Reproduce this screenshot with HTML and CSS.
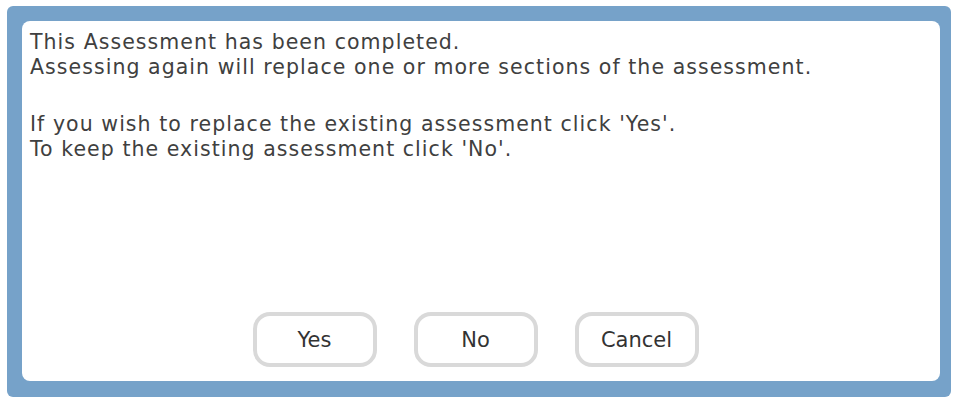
FILE: index.html
```html
<!DOCTYPE html>
<html>
<head>
<meta charset="utf-8">
<link rel="stylesheet" href="styles.css">
</head>
<body>
<div class="frame">
  <div class="dialog">
    <div class="message">
      <p class="para">This Assessment has been completed.<br>Assessing again will replace one or more sections of the assessment.</p>
      <p class="para">If you wish to replace the existing assessment click 'Yes'.<br>To keep the existing assessment click 'No'.</p>
    </div>
    <div class="buttons">
      <button class="btn">Yes</button>
      <button class="btn">No</button>
      <button class="btn">Cancel</button>
    </div>
  </div>
</div>
</body>
</html>
```
FILE: styles.css
```css
html, body {
  margin: 0;
  padding: 0;
  background: #ffffff;
}
body {
  padding: 6px 0 0 7px;
  font-family: "DejaVu Sans", Verdana, sans-serif;
}
.frame {
  box-sizing: border-box;
  width: 944px;
  height: 391px;
  background: #76a2c9;
  border-radius: 6px;
  padding: 15px 11px 16px 15px;
}
.dialog {
  box-sizing: border-box;
  height: 100%;
  background: #ffffff;
  border-radius: 8px;
  padding: 9px 8px 14px 8px;
  display: flex;
  flex-direction: column;
  justify-content: space-between;
}
.message {
  color: #404040;
  font-size: 20.5px;
  line-height: 25px;
  letter-spacing: 1.05px;
}
.para {
  margin: 0 0 32px 0;
}
.buttons {
  display: flex;
  justify-content: center;
  gap: 37px;
  padding-right: 11px;
}
.btn {
  box-sizing: border-box;
  width: 124px;
  height: 55px;
  background: #ffffff;
  border: 4px solid #d9d9d9;
  border-radius: 17px;
  font-family: "DejaVu Sans", Verdana, sans-serif;
  font-size: 21px;
  color: #333333;
  padding: 0;
}
```
